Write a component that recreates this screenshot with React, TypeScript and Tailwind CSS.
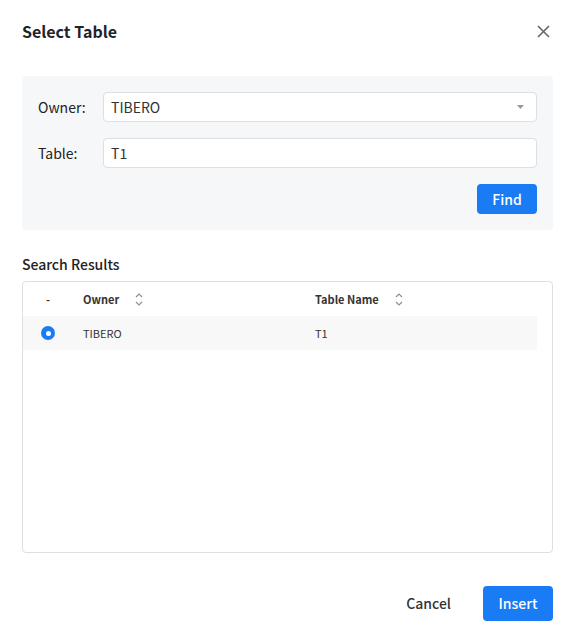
import React from "react";

const font = { fontFamily: '"Noto Sans CJK KR", "Noto Sans", sans-serif' };

function SortIcon() {
  return (
    <svg width="8" height="13" viewBox="0 0 8 13" className="ml-[16px] text-[#8a8f99]">
      <path d="M1 4 L4 1 L7 4" fill="none" stroke="currentColor" strokeWidth="1.2" />
      <path d="M1 9 L4 12 L7 9" fill="none" stroke="currentColor" strokeWidth="1.2" />
    </svg>
  );
}

export default function App() {
  return (
    <div className="h-[641px] w-[575px] bg-white text-[#222]" style={font}>
      <div className="flex h-[62px] items-center justify-between pl-[22px] pr-[25px]">
        <h1 className="text-[16px] font-bold text-[#1f2329]">Select Table</h1>
        <svg width="13" height="13" viewBox="0 0 13 13">
          <path d="M1 1 L12 12 M12 1 L1 12" stroke="#666" strokeWidth="1.6" />
        </svg>
      </div>

      <div className="mx-[22px] mt-[14px] rounded-[4px] bg-[#f6f7f9] px-[16px] pb-[16px] pt-[16px]">
        <div className="flex items-center">
          <label className="w-[65px] text-[14px] text-[#222]">Owner:</label>
          <div className="flex h-[30px] flex-1 items-center justify-between rounded-[4px] border border-[#dcdfe4] bg-white pl-[7px] pr-[12px] text-[14px] text-[#333]">
            <span>TIBERO</span>
            <svg width="7" height="4" viewBox="0 0 7 4">
              <path d="M0 0 L7 0 L3.5 4 Z" fill="#999" />
            </svg>
          </div>
        </div>
        <div className="mt-[16px] flex items-center">
          <label className="w-[65px] text-[14px] text-[#222]">Table:</label>
          <div className="flex h-[30px] flex-1 items-center rounded-[4px] border border-[#dcdfe4] bg-white pl-[7px] text-[14px] text-[#333]">
            T1
          </div>
        </div>
        <div className="mt-[16px] flex justify-end">
          <button className="h-[30px] w-[60px] rounded-[4px] bg-[#1a7cf4] text-[14px] font-medium text-white">
            Find
          </button>
        </div>
      </div>

      <div className="mx-[22px] mt-[24px] text-[14px] font-medium text-[#222]">Search Results</div>

      <div className="mx-[22px] mt-[6px] h-[272px] rounded-[4px] border border-[#dcdfe4] bg-white">
        <div className="mr-[15px] flex h-[34px] items-center text-[11px] font-bold text-[#333]">
          <div className="w-[60px] pl-[23px]">-</div>
          <div className="flex w-[232px] items-center">
            Owner
            <SortIcon />
          </div>
          <div className="flex items-center">
            Table Name
            <SortIcon />
          </div>
        </div>
        <div className="mr-[15px] flex h-[34px] items-center bg-[#f8f8f8] text-[11px] text-[#333]">
          <div className="flex w-[60px] items-center pl-[18px]">
            <span className="flex h-[14px] w-[14px] items-center justify-center rounded-full bg-[#1a7cf4]">
              <span className="h-[5px] w-[5px] rounded-full bg-white" />
            </span>
          </div>
          <div className="w-[232px]">TIBERO</div>
          <div>T1</div>
        </div>
      </div>

      <div className="mr-[22px] mt-[33px] flex items-center justify-end">
        <button className="mr-[32px] text-[14px] font-medium text-[#333]">Cancel</button>
        <button className="h-[35px] w-[70px] rounded-[4px] bg-[#1a7cf4] text-[14px] font-medium text-white">
          Insert
        </button>
      </div>
    </div>
  );
}
